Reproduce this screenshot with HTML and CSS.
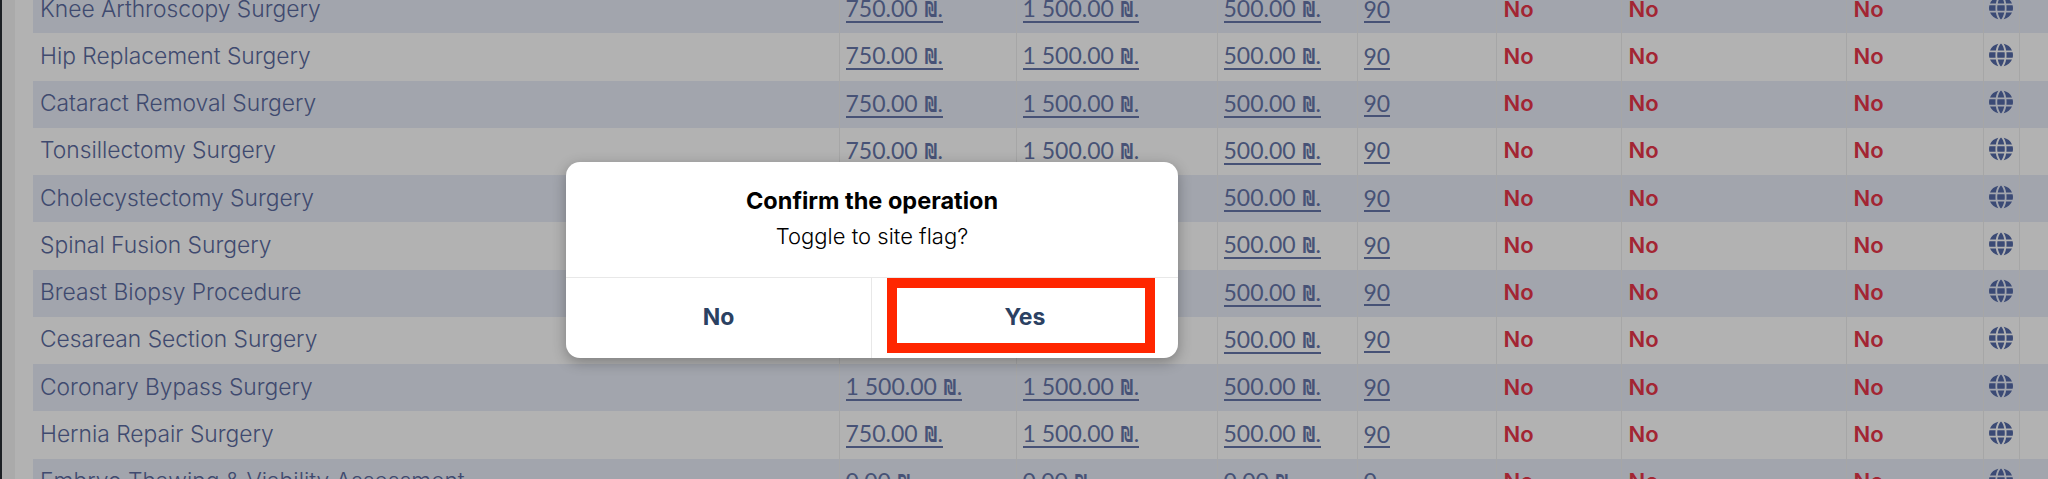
FILE: index.html
```html
<!DOCTYPE html>
<html lang="en">
<head>
<meta charset="utf-8">
<title>Procedures</title>
<link rel="stylesheet" href="styles.css">
</head>
<body>
<svg class="defs" width="0" height="0" aria-hidden="true"><defs>
<symbol id="globe" viewBox="0 0 24 24">
<path fill="currentColor" d="M8.4 9.2h7.2c.2 1.8.2 3.8 0 5.600H8.400c-.2-1.800-.2-3.800 0-5.600zM8.800 7.400C9.400 4 10.700 1.500 12 .5c1.300 1 2.600 3.500 3.200 6.900zM17.400 9.200h6.200c.5 1.800.5 3.800 0 5.600h-6.200c.2-1.800.2-3.800 0-5.600zM6.600 9.200H.4c-.5 1.800-.5 3.800 0 5.600h6.200c-.2-1.800-.2-3.800 0-5.600zM17.100 7.400C16.700 4.800 15.800 2.500 14.700.8c3.800.8 6.900 3.300 8.300 6.600zM6.900 7.400C7.300 4.800 8.200 2.500 9.300.8 5.500 1.600 2.400 4.100 1 7.400zM8.800 16.600h6.400c-.6 3.400-1.900 5.900-3.200 6.900-1.300-1-2.600-3.500-3.200-6.900zM17.100 16.600h5.900c-1.400 3.300-4.500 5.800-8.300 6.600 1.100-1.700 2-4 2.400-6.600zM6.900 16.600H1c1.400 3.300 4.500 5.800 8.300 6.600-1.100-1.700-2-4-2.400-6.600z"/>
</symbol>
</defs></svg>
<main class="page">
<div class="rail"></div>
<div class="gutter"></div>
<div class="sheet">
<table class="grid">
<colgroup><col class="c-name"><col class="c-a"><col class="c-b"><col class="c-c"><col class="c-d"><col class="c-e"><col class="c-f"><col class="c-g"><col class="c-h"><col class="c-i"></colgroup>
<tbody>
<tr><td class="name">Knee Arthroscopy Surgery</td><td><a>750.00 <span class="cur">₪</span>.</a></td><td><a>1 500.00 <span class="cur">₪</span>.</a></td><td><a>500.00 <span class="cur">₪</span>.</a></td><td><a>90</a></td><td class="no">No</td><td class="no">No</td><td class="no">No</td><td class="icon"><svg class="globe"><use href="#globe"/></svg></td><td></td></tr>
<tr><td class="name">Hip Replacement Surgery</td><td><a>750.00 <span class="cur">₪</span>.</a></td><td><a>1 500.00 <span class="cur">₪</span>.</a></td><td><a>500.00 <span class="cur">₪</span>.</a></td><td><a>90</a></td><td class="no">No</td><td class="no">No</td><td class="no">No</td><td class="icon"><svg class="globe"><use href="#globe"/></svg></td><td></td></tr>
<tr><td class="name">Cataract Removal Surgery</td><td><a>750.00 <span class="cur">₪</span>.</a></td><td><a>1 500.00 <span class="cur">₪</span>.</a></td><td><a>500.00 <span class="cur">₪</span>.</a></td><td><a>90</a></td><td class="no">No</td><td class="no">No</td><td class="no">No</td><td class="icon"><svg class="globe"><use href="#globe"/></svg></td><td></td></tr>
<tr><td class="name">Tonsillectomy Surgery</td><td><a>750.00 <span class="cur">₪</span>.</a></td><td><a>1 500.00 <span class="cur">₪</span>.</a></td><td><a>500.00 <span class="cur">₪</span>.</a></td><td><a>90</a></td><td class="no">No</td><td class="no">No</td><td class="no">No</td><td class="icon"><svg class="globe"><use href="#globe"/></svg></td><td></td></tr>
<tr><td class="name">Cholecystectomy Surgery</td><td><a>750.00 <span class="cur">₪</span>.</a></td><td><a>1 500.00 <span class="cur">₪</span>.</a></td><td><a>500.00 <span class="cur">₪</span>.</a></td><td><a>90</a></td><td class="no">No</td><td class="no">No</td><td class="no">No</td><td class="icon"><svg class="globe"><use href="#globe"/></svg></td><td></td></tr>
<tr><td class="name">Spinal Fusion Surgery</td><td><a>750.00 <span class="cur">₪</span>.</a></td><td><a>1 500.00 <span class="cur">₪</span>.</a></td><td><a>500.00 <span class="cur">₪</span>.</a></td><td><a>90</a></td><td class="no">No</td><td class="no">No</td><td class="no">No</td><td class="icon"><svg class="globe"><use href="#globe"/></svg></td><td></td></tr>
<tr><td class="name">Breast Biopsy Procedure</td><td><a>750.00 <span class="cur">₪</span>.</a></td><td><a>1 500.00 <span class="cur">₪</span>.</a></td><td><a>500.00 <span class="cur">₪</span>.</a></td><td><a>90</a></td><td class="no">No</td><td class="no">No</td><td class="no">No</td><td class="icon"><svg class="globe"><use href="#globe"/></svg></td><td></td></tr>
<tr><td class="name">Cesarean Section Surgery</td><td><a>750.00 <span class="cur">₪</span>.</a></td><td><a>1 500.00 <span class="cur">₪</span>.</a></td><td><a>500.00 <span class="cur">₪</span>.</a></td><td><a>90</a></td><td class="no">No</td><td class="no">No</td><td class="no">No</td><td class="icon"><svg class="globe"><use href="#globe"/></svg></td><td></td></tr>
<tr><td class="name">Coronary Bypass Surgery</td><td><a>1 500.00 <span class="cur">₪</span>.</a></td><td><a>1 500.00 <span class="cur">₪</span>.</a></td><td><a>500.00 <span class="cur">₪</span>.</a></td><td><a>90</a></td><td class="no">No</td><td class="no">No</td><td class="no">No</td><td class="icon"><svg class="globe"><use href="#globe"/></svg></td><td></td></tr>
<tr><td class="name">Hernia Repair Surgery</td><td><a>750.00 <span class="cur">₪</span>.</a></td><td><a>1 500.00 <span class="cur">₪</span>.</a></td><td><a>500.00 <span class="cur">₪</span>.</a></td><td><a>90</a></td><td class="no">No</td><td class="no">No</td><td class="no">No</td><td class="icon"><svg class="globe"><use href="#globe"/></svg></td><td></td></tr>
<tr><td class="name">Embryo Thawing &amp; Viability Assessment</td><td><a>0.00 <span class="cur">₪</span>.</a></td><td><a>0.00 <span class="cur">₪</span>.</a></td><td><a>0.00 <span class="cur">₪</span>.</a></td><td><a>0</a></td><td class="no">No</td><td class="no">No</td><td class="no">No</td><td class="icon"><svg class="globe"><use href="#globe"/></svg></td><td></td></tr>
</tbody>
</table>
</div>
</main>
<section class="dialog">
<div class="dialog-body">
<h2 class="dialog-title">Confirm the operation</h2>
<p class="dialog-text">Toggle to site flag?</p>
</div>
<div class="dialog-actions">
<button class="dialog-btn">No</button>
<button class="dialog-btn">Yes</button>
</div>
</section>
<div class="highlight"></div>
</body>
</html>
```
FILE: styles.css
```css
* { box-sizing: border-box; }
html, body { margin: 0; height: 100%; }
body { width: 2048px; height: 479px; overflow: hidden; position: relative; background: #b2b2b2; font-family: "Lato", "Liberation Sans", sans-serif; }
.defs { position: absolute; }
.page { display: flex; height: 479px; overflow: hidden; }
.rail { flex: 0 0 2px; background: #1c2024; }
.gutter { flex: 0 0 13px; margin-right: 18px; background: #aaaaaa; }
.sheet { flex: 1; min-width: 0; }
.grid { width: 2015px; margin-top: -14px; border-collapse: collapse; table-layout: fixed; color: #475276; font-size: 23px; }
.c-name { width: 806px; } .c-a { width: 177px; } .c-b { width: 201px; } .c-c { width: 140px; } .c-d { width: 139px; } .c-e { width: 125px; } .c-f { width: 225px; } .c-g { width: 137px; } .c-h { width: 36px; }
tr { height: 47.25px; background: #b2b2b2; }
tr:nth-child(odd) { background: #a2a5ad; }
td { padding: 0 0 2px 6px; border-left: 1px solid #a6a6a6; white-space: nowrap; overflow: hidden; line-height: 26px; }
td:first-child { border-left: 0; }
.name { padding-left: 7px; font-family: "Inter", "Liberation Sans", sans-serif; font-size: 22.8px; font-weight: 300; color: #3f4a6f; }
td a { display: inline-block; line-height: 23px; border-bottom: 2px solid currentColor; margin-top: 3px; }
.cur { display: inline-block; width: 22px; margin: 0 -4px; text-align: center; font-family: "DejaVu Sans", sans-serif; font-size: 22px; font-weight: 700; line-height: 1; transform: scaleX(.62); }
.no { padding-left: 7px; color: #a32533; font-family: "Inter", "Liberation Sans", sans-serif; font-size: 22px; font-weight: 600; }
.icon { padding: 0 0 4px 5px; color: #3b4a75; }
.globe { display: block; width: 24px; height: 24px; }
.dialog { position: absolute; left: 566px; top: 162px; width: 612px; height: 196px; display: flex; flex-direction: column; background: #fff; border-radius: 14px; box-shadow: 0 4px 14px rgba(0,0,0,.3); overflow: hidden; font-family: "Inter", "Liberation Sans", sans-serif; }
.dialog-body { height: 115px; padding-top: 24px; text-align: center; color: #000; }
.dialog-title { margin: 0; font-size: 23.5px; font-weight: 700; line-height: 30px; }
.dialog-text { margin: 6px 0 0; font-size: 22px; font-weight: 300; line-height: 28px; }
.dialog-actions { flex: 1; display: flex; border-top: 1px solid #e8e8e8; }
.dialog-btn { flex: 1 1 0; padding: 0 0 2px; border: 0; background: none; font: 700 23px "Inter", "Liberation Sans", sans-serif; color: #2b4162; }
.dialog-btn:first-child { flex: 0 0 305px; }
.dialog-btn + .dialog-btn { border-left: 1px solid #e8e8e8; }
.highlight { position: absolute; left: 887px; top: 278px; width: 268px; height: 75px; border: 10px solid #ff2600; }
```
